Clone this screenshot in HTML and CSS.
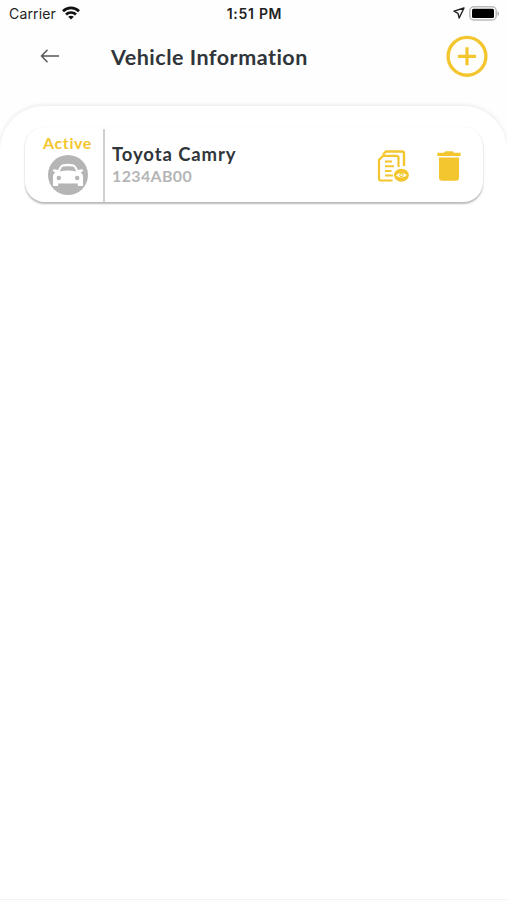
FILE: index.html
```
<!DOCTYPE html>
<html lang="en">
<head>
<meta charset="UTF-8">
<meta name="viewport" content="width=device-width, initial-scale=1.0">
<title>Vehicle Information</title>
<link rel="stylesheet" href="styles.css">
</head>
<body>

<!-- Phone status bar -->
<div class="status-bar">
<div class="status-left">
<span class="carrier">Carrier</span>
<svg width="18" height="14" viewBox="0 0 18 14" fill="none" stroke="#111" stroke-width="2.7">
<path d="M1 5.2C5.6 .8 12.4 .8 17 5.2"/>
<path d="M4 8.5C6.8 5.8 11.2 5.8 14 8.5"/>
<path d="M9 13.6L6.2 10.8C7.8 9.4 10.2 9.4 11.8 10.8Z" fill="#111" stroke="none"/>
</svg>
</div>
<span class="time">1:51 PM</span>
<div class="status-right">
<svg width="12" height="12" viewBox="0 0 12 12" fill="none" stroke="#222" stroke-width="1.4" stroke-linejoin="round">
<path d="M11 1L1 4.2L5 6.3L6.2 11Z"/>
</svg>
<svg width="31" height="15" viewBox="0 0 31 15">
<rect x=".8" y=".8" width="26.4" height="13.2" rx="4" fill="#fff" stroke="#bbb" stroke-width="1.5"/>
<rect x="3" y="2.7" width="22" height="9.4" rx="1.5" fill="#000"/>
<path d="M28.5 5.2C30.5 6 30.5 9 28.5 9.8Z" fill="#aaa"/>
</svg>
</div>
</div>

<!-- Page header -->
<div class="header">
<button class="back-btn" aria-label="Back">
<svg width="20" height="14" viewBox="0 0 20 14" fill="none" stroke="#555" stroke-width="1.4">
<path d="M19 7H1.5M7.5 .8L1.5 7L7.5 13.2"/>
</svg>
</button>
<h1>Vehicle Information</h1>
<button class="add-btn" aria-label="Add vehicle">
<svg width="42" height="42" viewBox="0 0 42 42" fill="none" stroke="#f3c62f">
<circle cx="21" cy="21.3" r="18.9" stroke-width="3.4"/>
<path d="M21 12.3V30.3M12 21.3H30" stroke-width="3.2"/>
</svg>
</button>
</div>

<!-- Vehicle list -->
<div class="sheet">
<div class="card">
<div class="status">
<span class="active">Active</span>
<svg width="40" height="40" viewBox="0 0 40 40">
<circle cx="20" cy="20" r="20" fill="#b5b5b5"/>
<path d="M10 15L12 11.5Q13 9.5 15 9.2Q20 8.3 25 9.2Q27 9.5 28 11.5L30 15L34 14.2Q36 15 34.5 16.5L32.8 17.3Q35 19.5 35 22V31H29.8V28.5H10.2V31H5V22Q5 19.5 7.2 17.3L5.5 16.5Q4 15 6 14.2Z" fill="#fff"/>
<path d="M11.7 16.5L13.5 12.7Q14 11.8 15.2 11.6Q20 11 24.8 11.6Q26 11.8 26.5 12.7L28.3 16.5Q20 14.5 11.7 16.5Z" fill="#b5b5b5"/>
<circle cx="10.8" cy="23" r="2.2" fill="#b5b5b5"/>
<circle cx="29.2" cy="23" r="2.2" fill="#b5b5b5"/>
</svg>
</div>
<div class="info">
<h2>Toyota Camry</h2>
<span class="plate">1234AB00</span>
</div>
<div class="actions">
<button class="view-btn" aria-label="View documents">
<svg width="32" height="32" viewBox="0 0 32 32" fill="none" stroke="#f3c62f" stroke-width="2.2">
<path d="M15.5 30.5H4Q2 30.5 2 28.5V10L6 5.8H19.5Q21.5 5.8 21.5 7.8V17"/>
<path d="M6 4.5L9 1.5H25Q27 1.5 27 3.5V16" stroke-width="2.4"/>
<path d="M8 11.5H15M8 16.3H17M8 21H14.5M8 25.5H16" stroke-width="1.9"/>
<ellipse cx="24.4" cy="25.2" rx="7.4" ry="6.5" fill="#f3c62f" stroke="none"/>
<path d="M19 25.2Q24.4 20.6 29.8 25.2Q24.4 29.8 19 25.2Z" fill="#fff" stroke="none"/>
<circle cx="24.4" cy="25.2" r="1.6" stroke-width="1.1"/>
</svg>
</button>
<button class="delete-btn" aria-label="Delete vehicle">
<svg width="24" height="30" viewBox="0 0 24 30" fill="#f3c62f">
<path d="M.4 1.8H7L8.2 .3H15.8L17 1.8H23.6V5H.4Z"/>
<path d="M2 6.4H22V26.5Q22 29.7 18.8 29.7H5.2Q2 29.7 2 26.5Z"/>
</svg>
</button>
</div>
</div>
</div>

</body>
</html>
```
FILE: styles.css
```
* {
box-sizing: border-box;
}

body {
margin: 0;
height: 900px;
display: flex;
flex-direction: column;
overflow: hidden;
background-color: #fefefe;
font-family: Lato, "Open Sans", sans-serif;
color: #30353a;
}

h1, h2 {
margin: 0;
white-space: nowrap;
}

svg {
display: block;
}

button {
padding: 0;
border: none;
background: none;
cursor: pointer;
}

.status-bar {
display: grid;
grid-template-columns: 1fr auto 1fr;
align-items: center;
height: 26px;
padding: 0 7px 0 9px;
font-family: Inter, sans-serif;
font-size: 14px;
color: #222;
}

.status-left, .status-right {
display: flex;
align-items: center;
gap: 6px;
}

.carrier {
letter-spacing: 0.15px;
}

.status-right {
justify-content: flex-end;
gap: 4px;
}

.time {
font-weight: 600;
letter-spacing: 0.7px;
}

.header {
display: flex;
align-items: center;
height: 60px;
padding: 0 19px 0 40px;
}

.header h1 {
margin: 1px 0 0 51px;
font-size: 21.5px;
font-weight: 700;
letter-spacing: 0.5px;
}

.add-btn {
margin-left: auto;
}

.sheet {
flex: 1;
margin-top: 20px;
padding: 21px 24px 0 25px;
border-radius: 44px 44px 0 0;
border-bottom: 1px solid #f2f2f2;
background-color: #fff;
box-shadow: 0 -1px 4px rgba(0, 0, 0, 0.09);
}

.card {
display: flex;
height: 75px;
border-radius: 20px;
background-color: #fff;
box-shadow: 0 1.5px 2px rgba(0, 0, 0, 0.28);
}

.status {
width: 80px;
margin-top: 2px;
padding: 4px 0 0 7px;
display: flex;
flex-direction: column;
align-items: center;
gap: 2px;
border-right: 2px solid #d0d0d0;
}

.active {
font-size: 16px;
font-weight: 700;
line-height: 20px;
letter-spacing: 0.6px;
color: #f3c62f;
}

.info {
padding: 16px 0 0 7px;
}

.info h2 {
font-size: 18.5px;
line-height: 22px;
letter-spacing: 0.9px;
}

.plate {
display: block;
font-size: 16px;
font-weight: 700;
line-height: 22px;
letter-spacing: 0.35px;
color: #b5b5b5;
}

.actions {
display: flex;
align-items: center;
gap: 28px;
margin-left: auto;
padding: 2px 22px 0 0;
}
```
